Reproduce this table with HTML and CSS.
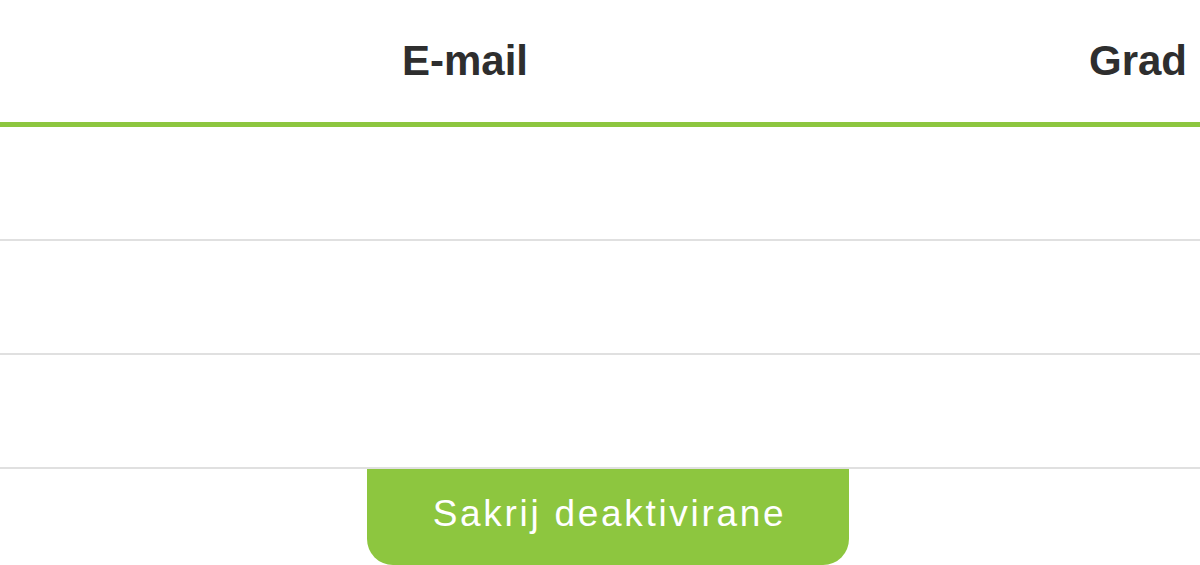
FILE: index.html
```html
<!DOCTYPE html>
<html>
<head>
	<meta charset="utf-8">
	<title>Korisnici</title>
	<link rel="stylesheet" href="styles.css">
</head>
<body>
	<div class="wrap">
		<table class="tabla">
			<colgroup>
				<col class="col-email">
				<col class="col-grad">
			</colgroup>
			<thead>
				<tr>
					<th>E-mail</th>
					<th>Grad</th>
				</tr>
			</thead>
			<tbody>
				<tr><td></td><td></td></tr>
				<tr><td></td><td></td></tr>
				<tr><td></td><td></td></tr>
			</tbody>
		</table>
		<div class="akcije">
			<button type="button" class="btn">Sakrij deaktivirane</button>
		</div>
	</div>
</body>
</html>
```

FILE: styles.css
```css
html, body{
	margin: 0;
	padding: 0;
	background: #fff;
	overflow: hidden;
}
body{
	font-family: "Liberation Sans", Arial, sans-serif;
	width: 1200px;
	height: 565px;
}
.wrap{
	width: 1346px;
}
.tabla{
	width: 1346px;
	table-layout: fixed;
	border-collapse: collapse;
}
.col-email{
	width: 930px;
}
.col-grad{
	width: 416px;
}
.tabla th{
	padding: 40px 0;
	line-height: 42px;
	font-size: 42px;
	font-weight: bold;
	color: #2e2e2e;
	text-align: center;
	border-bottom: 5px solid #8dc63f;
}
.tabla td{
	height: 112px;
	padding: 0;
	border-bottom: 2px solid #e0e0e0;
}
.akcije{
	padding-left: 367px;
}
.btn{
	display: block;
	width: 482px;
	height: 96px;
	margin: 0;
	padding: 0 0 8px 3px;
	border: none;
	border-radius: 0 0 26px 26px;
	background-color: #8dc63f;
	color: #fff;
	font-family: "Liberation Sans", Arial, sans-serif;
	font-size: 37px;
	line-height: 37px;
	letter-spacing: 2.7px;
	text-align: center;
	box-sizing: border-box;
}
```
